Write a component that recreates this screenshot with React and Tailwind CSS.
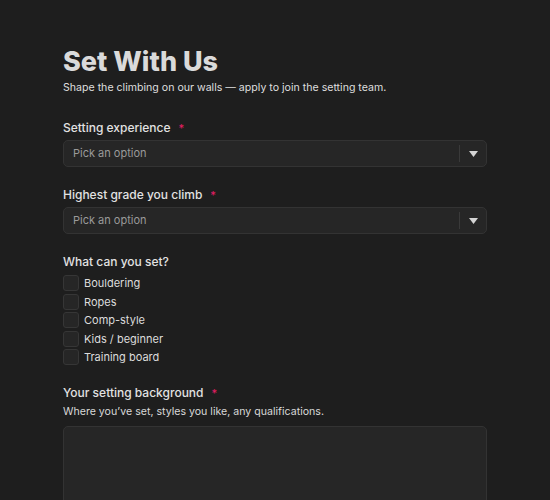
const font = { fontFamily: "Inter, 'Noto Sans', sans-serif" };

const skills = ["Bouldering", "Ropes", "Comp-style", "Kids / beginner", "Training board"];

function Label({ children, required }) {
  return (
    <div className="flex h-[16px] items-center gap-[8px] text-[12px] font-medium leading-[16px] text-[#e2e2e2]">
      {children}
      {required && <span className="text-[11px] leading-none text-[#e11d63]">*</span>}
    </div>
  );
}

function Select() {
  return (
    <div className="mt-[4px] flex h-[27px] items-center rounded-[5px] border border-[#333] bg-[#262626]">
      <span className="flex-1 pl-[9px] text-[11px] text-[#9a9a9a]">Pick an option</span>
      <span className="h-[17px] w-px bg-[#3a3a3a]" />
      <span className="flex w-[26px] justify-center">
        <svg width="9" height="6" viewBox="0 0 9 6">
          <path d="M0 0h9L4.5 6z" fill="#d4d4d4" />
        </svg>
      </span>
    </div>
  );
}

export default function App() {
  return (
    <div className="min-h-[500px] bg-[#1e1e1e] px-[63px] pt-[47px]" style={font}>
      <h1 className="text-[27px] font-extrabold leading-[30px] text-[#dadada]">Set With Us</h1>
      <p className="mt-[4px] text-[10.6px] leading-[14px] text-[#dedede]">Shape the climbing on our walls — apply to join the setting team.</p>

      <div className="mt-[25px]">
        <Label required>Setting experience</Label>
        <Select />
      </div>

      <div className="mt-[20px]">
        <Label required>Highest grade you climb</Label>
        <Select />
      </div>

      <div className="mt-[20px]">
        <Label>What can you set?</Label>
        <div className="mt-[4px] flex flex-col">
          {skills.map((s) => (
            <label key={s} className="flex h-[18.5px] items-center gap-[5px] text-[11px] text-[#dcdcdc]">
              <span className="h-[16px] w-[16px] rounded-[3px] border border-[#363636] bg-[#262626]" />
              {s}
            </label>
          ))}
        </div>
      </div>

      <div className="mt-[18.5px]">
        <Label required>Your setting background</Label>
        <p className="mt-[4px] text-[10.6px] leading-[14px] text-[#d8d8d8]">Where you’ve set, styles you like, any qualifications.</p>
        <div className="mt-[7px] h-[100px] rounded-[5px] border border-[#333] bg-[#262626]" />
      </div>
    </div>
  );
}
